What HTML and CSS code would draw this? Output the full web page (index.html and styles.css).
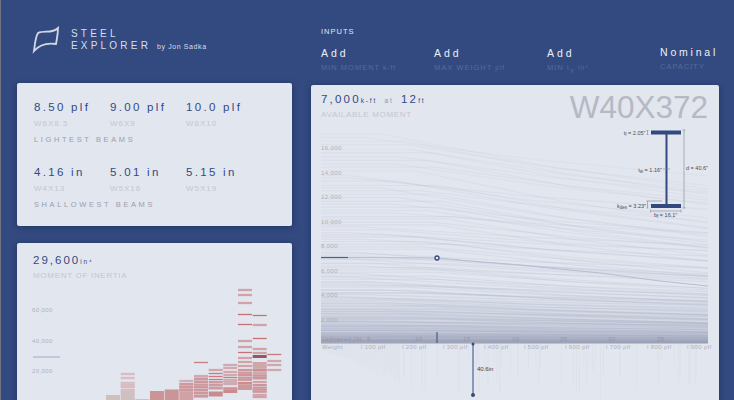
FILE: index.html
```html
<!DOCTYPE html>
<html lang="en">

<head>
    <meta charset="UTF-8">
    <meta name="viewport" content="width=device-width, initial-scale=1.0">
    <title>Steel Explorer</title>
    <link rel="stylesheet" href="styles.css">
</head>

<body>
    <div class="page">
        <div class="left-col">
            <header class="brand">
                <svg class="logo" viewBox="0 0 28 28" width="28" height="28">
                    <path d="M2 25 C3 19 3 12 6 7 C12 4 20 8 26 2 C26 8 25 12 24 18 C17 17 9 17 2 25 Z" />
                </svg>
                <div class="brand-text">
                    <div>STEEL</div>
                    <div>EXPLORER <span class="byline">by Jon Sadka</span></div>
                </div>
            </header>

            <section class="card beams">
                <div class="beam-row">
                    <div class="beam"><div class="beam-value">8.50 plf</div><div class="beam-name">W6X8.5</div></div>
                    <div class="beam"><div class="beam-value">9.00 plf</div><div class="beam-name">W6X9</div></div>
                    <div class="beam"><div class="beam-value">10.0 plf</div><div class="beam-name">W8X10</div></div>
                </div>
                <div class="beam-title">LIGHTEST BEAMS</div>
                <div class="beam-row second">
                    <div class="beam"><div class="beam-value">4.16 in</div><div class="beam-name">W4X13</div></div>
                    <div class="beam"><div class="beam-value">5.01 in</div><div class="beam-name">W5X16</div></div>
                    <div class="beam"><div class="beam-value">5.15 in</div><div class="beam-name">W5X19</div></div>
                </div>
                <div class="beam-title">SHALLOWEST BEAMS</div>
            </section>

            <section class="card inertia">
                <div class="inertia-head">
                    <div class="stat"><span class="stat-num">29,600</span><span class="stat-unit">in⁴</span></div>
                    <div class="stat-label">MOMENT OF INERTIA</div>
                </div>
                <svg class="chart" viewBox="17 285 275 130" width="275" height="130">
                    <g class="axis-label">
                        <text x="32" y="312">60,000</text>
                        <text x="32" y="342.5">40,000</text>
                        <text x="32" y="373">20,000</text>
                    </g>
                    <line class="inertia-mark" x1="33" y1="357" x2="60" y2="357" />
                    <g id="histogram"></g>
                </svg>
            </section>
        </div>

        <div class="right-col">
            <section class="inputs">
                <div class="inputs-title">INPUTS</div>
                <div class="input-row">
                    <div class="input"><div class="input-value">Add</div><div class="input-label">MIN MOMENT <span class="lower">k-ft</span></div></div>
                    <div class="input"><div class="input-value">Add</div><div class="input-label">MAX WEIGHT <span class="lower">plf</span></div></div>
                    <div class="input"><div class="input-value">Add</div><div class="input-label">MIN I<sub>X</sub> <span class="lower">in⁴</span></div></div>
                    <div class="nominal"><div class="input-value">Nominal</div><div class="input-label">CAPACITY</div></div>
                </div>
            </section>

            <section class="card explorer">
                <div class="explorer-head">
                    <div>
                        <div class="stat">
                            <span class="stat-num small">7,000</span><span class="stat-unit">k-ft</span>
                            <span class="stat-unit at">at</span>
                            <span class="stat-num small">12</span><span class="stat-unit">ft</span>
                        </div>
                        <div class="stat-label">AVAILABLE MOMENT</div>
                    </div>
                    <div class="section-name">W40X372</div>
                </div>

                <svg class="chart" viewBox="311 125 408 290" width="408" height="290">
                    <defs>
                        <linearGradient id="base-shade" x1="0" y1="0" x2="0" y2="1">
                            <stop offset="0" stop-color="#a6abc0" stop-opacity="0" />
                            <stop offset="0.8" stop-color="#a6abc0" stop-opacity="0.35" />
                            <stop offset="0.95" stop-color="#a0a4ba" stop-opacity="0.6" />
                            <stop offset="1" stop-color="#8f94ac" stop-opacity="0.9" />
                        </linearGradient>
                    </defs>
                    <g id="moment-lines"></g>
                    <rect x="321" y="290" width="387" height="53.5" fill="url(#base-shade)" />
                    <g id="depth-lines"></g>

                    <g class="axis-label">
                        <text x="321" y="150">16,000</text>
                        <text x="321" y="174.500">14,000</text>
                        <text x="321" y="199">12,000</text>
                        <text x="321" y="223.500">10,000</text>
                        <text x="321" y="248">8,000</text>
                        <text x="321" y="272.500">6,000</text>
                        <text x="321" y="297">4,000</text>
                        <text x="321" y="321.500">2,000</text>
                    </g>

                    <g class="axis-label faded">
                        <text x="322" y="341">Unbraced (ft)</text>
                        <text x="367" y="341">5</text>
                        <text x="415" y="341">10</text>
                        <text x="463" y="341">15</text>
                        <text x="512" y="341">20</text>
                        <text x="560" y="341">25</text>
                        <text x="608" y="341">30</text>
                        <text x="657" y="341">35</text>
                    </g>

                    <g class="axis-label">
                        <text x="322" y="349">Weight</text>
                        <text x="361" y="349">l 100 plf</text>
                        <text x="402" y="349">l 200 plf</text>
                        <text x="443" y="349">l 300 plf</text>
                        <text x="484" y="349">l 400 plf</text>
                        <text x="524" y="349">l 500 plf</text>
                        <text x="565" y="349">l 600 plf</text>
                        <text x="606" y="349">l 700 plf</text>
                        <text x="647" y="349">l 800 plf</text>
                        <text x="687" y="349">l 900 plf</text>
                    </g>

                    <polyline class="selected-curve" points="348,257.500 437,258 470,261 520,265 600,273 660,281 708,286" />
                    <line class="selected-flat" x1="321" y1="257.500" x2="348" y2="257.500" />
                    <circle class="selected-dot" cx="437" cy="258" r="2" />
                    <line class="selected-tick" x1="437" y1="332" x2="437" y2="343" />

                    <line class="depth-bar" x1="473" y1="344" x2="473" y2="395" />
                    <circle class="depth-end" cx="473" cy="395" r="2" />
                    <circle class="depth-end" cx="473" cy="344" r="1.500" />
                    <text class="depth-text" x="477" y="371">40.6in</text>

                    <rect class="steel" x="651" y="130.500" width="30" height="4" />
                    <rect class="steel" x="651" y="204" width="30" height="4" />
                    <rect class="steel" x="665.500" y="134" width="2" height="70" />
                    <g class="dim">
                        <path d="M684 130 V208 M682.500 130 H685.500 M682.500 208 H685.500" />
                        <path d="M650.500 211 H681 M650.500 209.500 V212.500 M681 209.500 V212.500" />
                        <path d="M647.500 130.500 V134.500 M646.500 130.500 H648.500 M646.500 134.500 H648.500" />
                        <path d="M647.500 201 V208 M646.500 201 H648.500 M646.500 208 H648.500 M648 201 H662" />
                        <path d="M663 169 H670" />
                    </g>
                    <g class="dim-text">
                        <text x="645.500" y="135" text-anchor="end">t<tspan class="sub" dy="1">f</tspan><tspan dy="-1"> = 2.05"</tspan></text>
                        <text x="662" y="171.500" text-anchor="end">t<tspan class="sub" dy="1">w</tspan><tspan dy="-1"> = 1.16"</tspan></text>
                        <text x="646" y="208" text-anchor="end">k<tspan class="sub" dy="1">des</tspan><tspan dy="-1"> = 3.23"</tspan></text>
                        <text x="654" y="216.500">b<tspan class="sub" dy="1">f</tspan><tspan dy="-1"> = 16.1"</tspan></text>
                        <text x="686" y="170">d = 40.6"</text>
                    </g>
                </svg>
            </section>
        </div>
    </div>

    <script src="script.js"></script>
</body>

</html>
```

FILE: styles.css
```css
html,
body {
    height: 400px;
    overflow: hidden;
}

body {
    font-family: "Liberation Sans", Arial, sans-serif;
    margin: 0;
    padding: 0;
    background-color: #334a80;
    border-left: 1px solid #70757f;
}

.page {
    display: flex;
    gap: 19px;
    padding-left: 16px;
    height: 400px;
    overflow: hidden;
}

.left-col {
    width: 275px;
    flex-shrink: 0;
}

.right-col {
    width: 408px;
    flex-shrink: 0;
}

.card {
    background-color: #e2e6ef;
    border-radius: 2px;
    box-shadow: 0 1px 6px rgba(15, 25, 60, 0.45);
}

/* header */

.brand {
    height: 83px;
    box-sizing: border-box;
    padding: 25px 0 0 15px;
    display: flex;
    gap: 11px;
}

.logo {
    margin-top: 1px;
}

.logo path {
    fill: none;
    stroke: #d3d7e1;
    stroke-width: 1.8;
}

.brand-text {
    color: #d9dde8;
    font-size: 10px;
    line-height: 12px;
    letter-spacing: 3.2px;
    padding-top: 3px;
    white-space: nowrap;
}

.byline {
    font-size: 7px;
    letter-spacing: 0.6px;
}

/* lightest / shallowest beams */

.beams {
    height: 143px;
    box-sizing: border-box;
    padding: 17px 0 0 17px;
    margin-bottom: 17px;
}

.beam-row {
    display: flex;
}

.beam-row.second {
    margin-top: 20px;
}

.beam {
    width: 76px;
}

.beam-value {
    color: #334a80;
    font-size: 11.5px;
    line-height: 14px;
    letter-spacing: 2.3px;
    white-space: nowrap;
}

.beam-name {
    color: #c3c7d2;
    font-size: 8px;
    line-height: 10px;
    letter-spacing: 1px;
    margin-top: 5px;
}

.beam-title {
    color: #9a9ea9;
    font-size: 7.5px;
    line-height: 10px;
    letter-spacing: 2.6px;
    margin-top: 6px;
}

/* stat headings */

.stat {
    color: #334a80;
    white-space: nowrap;
}

.stat-num {
    font-size: 11.5px;
    line-height: 15px;
    letter-spacing: 2px;
}

.stat-num.small {
    letter-spacing: 2.2px;
}

.stat-unit {
    font-size: 6.5px;
    letter-spacing: 1.8px;
}

.stat-unit.at {
    color: #8a95b2;
    margin: 0 3px;
}

.stat-label {
    color: #c3c7d2;
    font-size: 8px;
    line-height: 10px;
    letter-spacing: 0.7px;
    margin-top: 3px;
    white-space: nowrap;
}

.inertia {
    height: 180px;
}

.inertia-head {
    height: 42px;
    box-sizing: border-box;
    padding: 7px 0 0 16px;
}

.chart {
    display: block;
}

/* inputs */

.inputs {
    height: 85px;
    box-sizing: border-box;
    padding: 27px 0 0 10px;
}

.inputs-title {
    color: #e2e6ef;
    font-size: 7.5px;
    line-height: 10px;
    letter-spacing: 1px;
}

.input-row {
    display: flex;
    margin-top: 10px;
}

.input {
    width: 113px;
    flex-shrink: 0;
}

.nominal {
    margin-top: -1px;
    white-space: nowrap;
}

.input-value {
    color: #eef0f6;
    font-size: 10.5px;
    line-height: 12px;
    letter-spacing: 3px;
}

.input-label {
    color: #566a99;
    font-size: 7.5px;
    line-height: 10px;
    letter-spacing: 1px;
    margin-top: 4px;
    white-space: nowrap;
}

.nominal .input-value {
    letter-spacing: 2.8px;
}

.lower {
    font-size: 6.5px;
}

sub {
    font-size: 6px;
    line-height: 0;
}

/* explorer */

.explorer {
    height: 330px;
}

.explorer-head {
    height: 40px;
    box-sizing: border-box;
    padding: 4px 11px 0 10px;
    display: flex;
    justify-content: space-between;
}

.section-name {
    color: #b6b9c4;
    font-size: 31.5px;
    line-height: 30px;
    margin-top: 3px;
}

/* svg text and marks */

.axis-label {
    fill: #aeb1bb;
    font-size: 6px;
    letter-spacing: 0.4px;
}

.axis-label.faded {
    fill: #9396a8;
}

.inertia-mark {
    stroke: #a9b4cf;
    stroke-width: 1.2;
}

.selected-curve {
    fill: none;
    stroke: #b4bdd2;
    stroke-width: 1;
}

.selected-flat {
    stroke: #4b6095;
    stroke-width: 1.2;
}

.selected-dot {
    fill: #e2e6ef;
    stroke: #334a80;
    stroke-width: 1.3;
}

.selected-tick,
.depth-bar {
    stroke: #334a80;
    stroke-width: 1;
}

.depth-end,
.steel {
    fill: #334a80;
}

.depth-text {
    fill: #3a3d48;
    font-size: 6px;
}

.dim {
    fill: none;
    stroke: #85878f;
    stroke-width: 0.6;
}

.dim-text {
    fill: #4a4c55;
    font-size: 5.5px;
}

.dim-text .sub {
    font-size: 4.5px;
}
```

FILE: script.js
```js
const NS = 'http://www.w3.org/2000/svg';

// small seeded generator so every render draws the same chart
let seed = 7;
function rand() {
    seed = (seed * 16807) % 2147483647;
    return seed / 2147483647;
}

function add(parent, tag, attrs) {
    const el = document.createElementNS(NS, tag);
    Object.keys(attrs).forEach(key => el.setAttribute(key, attrs[key]));
    parent.appendChild(el);
}

// moment vs unbraced length
const momentLines = document.getElementById('moment-lines');
for (let i = 0; i < 170; i++) {
    const t = Math.pow(i / 170, 3.3);
    const y0 = 342 - 212 * t - rand() * 1.5;
    const height = 343 - y0;
    const bend = 345 + rand() * 110;
    const drop = height * (0.15 + rand() * 0.18);
    const pts = [
        [321, y0],
        [bend, y0],
        [bend + (708 - bend) * 0.5, y0 + drop * 0.58],
        [708, y0 + drop]
    ];
    add(momentLines, 'polyline', {
        points: pts.map(p => p[0] + ',' + p[1].toFixed(1)).join(' '),
        fill: 'none',
        stroke: '#a3abc4',
        'stroke-width': 1.1,
        'stroke-opacity': 0.08 + (1 - t) * 0.14
    });
}

// depth of each section, hanging under the axis
const depthLines = document.getElementById('depth-lines');
for (let x = 323; x < 702; x += 1.5) {
    const near = x < 400 ? (x - 320) / 80 : 1;
    if (x > 400 && rand() < 0.72) continue;
    const len = 6 + near * (x < 400 ? 34 : 12 + rand() * 40) * (0.6 + rand() * 0.4);
    add(depthLines, 'line', {
        x1: x.toFixed(1),
        y1: 344,
        x2: x.toFixed(1),
        y2: (344 + len).toFixed(1),
        stroke: '#ccd1de',
        'stroke-width': 0.8,
        'stroke-opacity': x < 400 ? 0.22 : 0.34
    });
}

// moment of inertia histogram: x, strength, lines, solid blocks [y1, y2, opacity]
const columns = [
    { x: 106, k: 0.3, lines: [], blocks: [[395, 400, 0.9]] },
    { x: 120.7, k: 0.45, lines: [374, 378, 383, 385, 387, 390], blocks: [[391, 400, 0.9]] },
    { x: 135.3, k: 0.4, lines: [], blocks: [[399, 400, 0.9]] },
    { x: 150, k: 0.55, lines: [], blocks: [[391, 400, 0.9]] },
    { x: 164.7, k: 0.65, lines: [], blocks: [[389.5, 400, 0.9]] },
    { x: 179.3, k: 0.75, lines: [381, 384, 387, 390], blocks: [[383, 400, 0.75]] },
    { x: 194, k: 0.85, lines: [362.5, 376, 379, 382, 385, 387, 390, 393, 396], blocks: [[377, 398, 0.6]] },
    { x: 208.7, k: 0.9, lines: [370, 373.5, 376.5, 379.500, 382, 385, 388], blocks: [[381, 390, 0.45], [391.5, 396.5, 1]] },
    { x: 223.3, k: 0.85, lines: [365, 368, 372, 375, 377.5, 380, 382, 384, 388], blocks: [[388, 393, 1]] },
    { x: 238, k: 1, lines: [290, 295, 303, 314.5, 324.5, 341, 347, 352.5, 358, 362, 366, 370, 373, 375, 378, 380, 383], blocks: [[369, 380, 0.45], [382, 390, 0.85]] },
    { x: 252.7, k: 1, lines: [315.5, 325, 338.5, 349, 353, 370, 374, 376, 378, 382, 385, 388, 390, 392, 395, 397], blocks: [[362, 373, 0.7], [375, 380, 0.45], [384, 392, 0.5]] },
    { x: 267.3, k: 0.9, lines: [354.5, 361, 365, 370], blocks: [] }
];

const histogram = document.getElementById('histogram');
columns.forEach(col => {
    col.blocks.forEach(b => {
        add(histogram, 'rect', {
            x: col.x, y: b[0], width: 14, height: b[1] - b[0],
            fill: col.k < 0.5 ? '#cdbab9' : '#c98b8c',
            'fill-opacity': b[2]
        });
    });
    col.lines.forEach(y => {
        add(histogram, 'rect', {
            x: col.x, y: y - 1.5, width: 14, height: 3,
            fill: '#d9c6cc', 'fill-opacity': 0.55
        });
        add(histogram, 'rect', {
            x: col.x, y: y - 0.5, width: 14, height: 1,
            fill: '#bd4f52', 'fill-opacity': col.k * 0.75
        });
    });
});
add(histogram, 'rect', { x: 252.7, y: 355, width: 14, height: 3, fill: '#8e3a4a', 'fill-opacity': 0.85 });
```
